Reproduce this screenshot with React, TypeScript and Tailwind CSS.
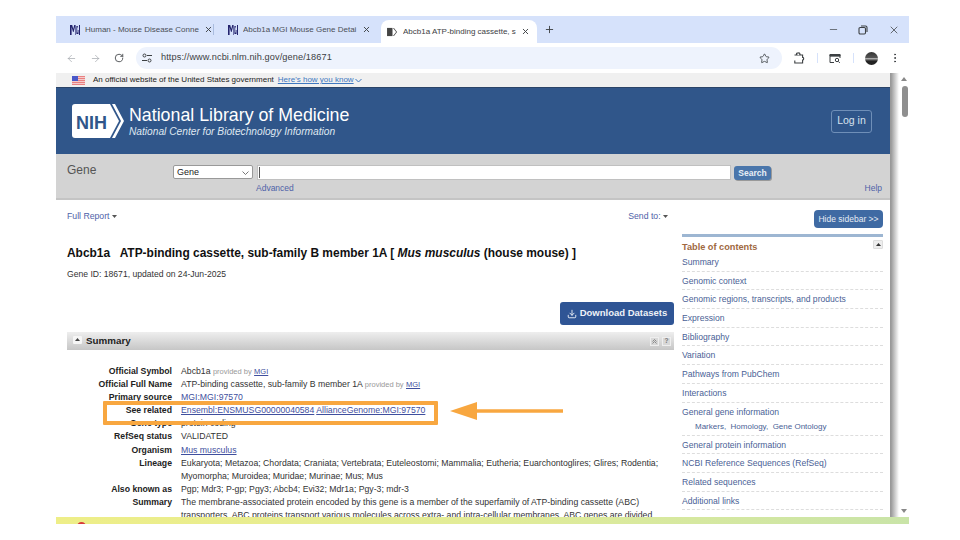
import React from 'react';
import { ArrowLeft, ArrowRight, Download, EllipsisVertical, Minus, Plus, RotateCw, Star, X } from 'lucide-react';

const toc = [
  'Summary',
  'Genomic context',
  'Genomic regions, transcripts, and products',
  'Expression',
  'Bibliography',
  'Variation',
  'Pathways from PubChem',
  'Interactions',
];
const toc2 = ['General protein information', 'NCBI Reference Sequences (RefSeq)', 'Related sequences', 'Additional links'];

function MgiIcon() {
  // favicon, three tall squeezed letters
  return (
    <svg width="10" height="10" viewBox="0 0 10 10" className="shrink-0">
      <path d="M0 0v10h1.6V2L3 7h.6L5 2v8h.6V0H4.2L3.3 4 2.2 0z" fill="#23236e" />
      <path d="M6.4 1h1.4v1.4H7.2v5.2h.6V5h.7v4H6.4z" fill="#23236e" />
      <path d="M9 0h1v10H9z" fill="#23236e" />
    </svg>
  );
}

function Tab({ title, active }: { title: string; active?: boolean }) {
  if (active) {
    return (
      <div className="flex items-center w-[156px] h-[23px] bg-white rounded-t-[8px] pl-[6px] pr-[7px] ml-[9px] mt-[4px]">
        <svg width="11" height="10" viewBox="0 0 12 11" className="shrink-0 mr-[5px]">
          <path d="M0 1h6v9H0z" fill="#444" />
          <path d="M6.6 1h1L11 5.5 7.6 10h-1L10 5.5z" fill="#444" />
        </svg>
        <span className="text-[8px] text-[#3c4043] whitespace-nowrap overflow-hidden flex-1">Abcb1a ATP-binding cassette, s</span>
        <X size={9} strokeWidth={2.5} className="text-[#3c4043] shrink-0 ml-[4px]" />
      </div>
    );
  }
  return (
    <div className="flex items-center w-[158px] h-[27px] pl-[14px] pr-[1px]">
      <MgiIcon />
      <span className="text-[8px] text-[#4a4f57] whitespace-nowrap overflow-hidden flex-1 ml-[5px]">{title}</span>
      <X size={9} strokeWidth={2.5} className="text-[#3c4043] shrink-0 ml-[4px]" />
    </div>
  );
}

function Row({ label, children }: { label: string; children: React.ReactNode }) {
  return (
    <div className="flex h-[13.1px] leading-[13px]">
      <div className="w-[105px] shrink-0 text-right font-bold text-[#222] whitespace-nowrap">{label}</div>
      <div className="ml-[9px] w-[484px] text-[#333] whitespace-nowrap">{children}</div>
    </div>
  );
}

function Lnk({ children }: { children: React.ReactNode }) {
  return <span className="text-[#3f4f9e] underline">{children}</span>;
}

function Caret() {
  return (
    <svg width="5" height="3" viewBox="0 0 5 3" className="inline-block align-[1px]"><path d="M0 0h5L2.5 3z" fill="#555" /></svg>
  );
}

export default function App() {
  return (
    <div className="w-[960px] h-[540px] bg-white pt-[16px] pl-[56px] overflow-hidden font-['Liberation_Sans',Arial,sans-serif]">
      <div className="relative w-[853px] h-[508px] flex flex-col overflow-hidden">
        {/* tab strip */}
        <div className="h-[27px] shrink-0 bg-[#d6e2fb] flex items-start">
          <Tab title="Human - Mouse Disease Conne" />
          <div className="w-px h-[11px] bg-[#a9bcdf] mt-[8px] -ml-px" />
          <Tab title="Abcb1a MGI Mouse Gene Detai" />
          <Tab title="" active />
          <Plus size={11} strokeWidth={2} className="text-[#3c4043] ml-[7px] mt-[8px]" />
          <div className="flex-1" />
          <Minus size={11} strokeWidth={1.5} className="text-[#3c4043] mt-[8px] mr-[19px]" />
          <svg width="10" height="10" viewBox="0 0 10 10" className="mt-[9px] mr-[20px]" fill="none" stroke="#3c4043" strokeWidth="1.1">
            <rect x="1" y="2.5" width="6.5" height="6.5" rx="1.2" />
            <path d="M3 1h4.5A1.5 1.5 0 0 1 9 2.5V7" />
          </svg>
          <X size={12} strokeWidth={1.5} className="text-[#3c4043] mt-[8px] mr-[9px]" />
        </div>

        {/* toolbar */}
        <div className="h-[30px] shrink-0 bg-white flex items-center rounded-t-[6px]">
          <ArrowLeft size={11} strokeWidth={1.5} className="text-[#a0a4aa] ml-[10px]" />
          <ArrowRight size={11} strokeWidth={1.5} className="text-[#a0a4aa] ml-[13px]" />
          <RotateCw size={10} strokeWidth={2} className="text-[#3c4043] ml-[13px]" />
          <div className="ml-[12px] w-[646px] shrink-0 h-[22px] bg-[#eef3fd] rounded-full flex items-center pl-[6px] pr-[12px]">
            <svg width="10" height="10" viewBox="0 0 10 10" fill="none" stroke="#3c4043" strokeWidth="1" className="shrink-0">
              <circle cx="2.5" cy="2.5" r="1.5" />
              <path d="M5 2.5h5M0 7.5h5" />
              <circle cx="7.5" cy="7.5" r="1.5" />
            </svg>
            <span className="ml-[9px] text-[9.2px] tracking-[0.1px] text-[#3c4043] flex-1">https://www.ncbi.nlm.nih.gov/gene/18671</span>
            <Star size={11} strokeWidth={1.8} className="text-[#3c4043]" />
          </div>
          <svg width="12" height="12" viewBox="0 0 12 12" fill="none" stroke="#3c4043" strokeWidth="1.1" className="ml-[11px] shrink-0">
            <path d="M1.5 3H4a1 1 0 0 1 1-1.8A1 1 0 0 1 6.6 3h3v2.4a1 1 0 0 1 1 1.4 1 1 0 0 1-1 1.2V11H1.8V8.5" />
          </svg>
          <div className="w-px h-[10px] bg-[#d6e2fb] ml-[12px] shrink-0" />
          <svg width="12" height="11" viewBox="0 0 12 11" fill="none" stroke="#3c4043" strokeWidth="1" className="ml-[11px] shrink-0">
            <path d="M5 9.5H1V1.5h10V5" />
            <path d="M1 1.5h10v1.6H1z" fill="#3c4043" />
            <circle cx="8" cy="7" r="1.7" />
            <path d="M9.3 8.4l1.5 1.5" />
          </svg>
          <div className="w-px h-[10px] bg-[#d6e2fb] ml-[12px] shrink-0" />
          <div className="w-[13px] h-[13px] shrink-0 rounded-full ml-[11px] bg-[linear-gradient(#333_0%,#555_45%,#aaa_50%,#222_70%)]" />
          <EllipsisVertical size={12} strokeWidth={2} className="text-[#3c4043] ml-[11px] shrink-0" />
        </div>

        {/* page */}
        <div className="flex-1 min-h-0 flex">
          <div className="relative w-[835px] shrink-0 flex flex-col min-h-0 overflow-hidden">
            {/* gov banner */}
            <div className="h-[14px] shrink-0 bg-[#f0f0f0] flex items-center pl-[16px]">
              <svg width="13" height="9" viewBox="0 0 13 9" className="shrink-0">
                <rect width="13" height="9" fill="#e98080" />
                <path d="M0 1.5h13M0 3.5h13M0 5.5h13M0 7.5h13" stroke="#f6dede" strokeWidth="0.8" />
                <rect width="6" height="5" fill="#4a58c8" />
              </svg>
              <span className="ml-[8px] text-[8px] text-[#222]">An official website of the United States government</span>
              <span className="ml-[4px] text-[8px] text-[#3f78c0] underline">Here's how you know</span>
              <svg width="7" height="5" viewBox="0 0 7 5" fill="none" stroke="#3f78c0" strokeWidth="1" className="ml-[1px]"><path d="M.5 1l3 3 3-3" /></svg>
            </div>

            {/* NIH header */}
            <div className="h-[67px] shrink-0 bg-[#30568a] flex items-center pl-[16px] pr-[19px] border-t border-[#2a4468]">
              <svg width="52" height="34" viewBox="0 0 52 34" className="shrink-0">
                <path d="M3 0h35l9 17-9 17H3a3 3 0 0 1-3-3V3a3 3 0 0 1 3-3z" fill="#fff" />
                <path d="M40 0h3l9 17-9 17h-3l9-17z" fill="#fff" />
                <text x="4" y="25" fontSize="18.5" fontWeight="700" fontFamily="Liberation Sans" fill="#30568a" textLength="31" lengthAdjust="spacingAndGlyphs">NIH</text>
              </svg>
              <div className="ml-[5px] text-white mt-[1px]">
                <div className="text-[17.8px] leading-[19px] whitespace-nowrap">National Library of Medicine</div>
                <div className="text-[10.2px] leading-[12px] mt-[1px] italic text-[#dfe6f0] whitespace-nowrap">National Center for Biotechnology Information</div>
              </div>
              <div className="flex-1" />
              <div className="w-[41px] h-[23px] border border-[#6f8fb8] rounded-[3px] flex items-center justify-center text-[10.5px] text-[#d8e2ee]">Log in</div>
            </div>

            {/* search bar */}
            <div className="h-[46px] shrink-0 bg-[#d3d3d3] border-b-2 border-[#c4c4c4] flex pl-[11px] pr-[9px]">
              <div className="w-[106px] shrink-0 text-[12px] text-[#555] pt-[7px]">Gene</div>
              <div className="mt-[11px] w-[80px] h-[14px] shrink-0 bg-white border border-[#999] rounded-[2px] flex items-center justify-between pl-[3px] pr-[3px] pt-px text-[9px] text-[#222]">
                Gene
                <svg width="7" height="4" viewBox="0 0 7 4" fill="none" stroke="#555" strokeWidth="0.8"><path d="M.5.5l3 3 3-3" /></svg>
              </div>
              <div className="ml-[4px] flex flex-col w-[474px] shrink-0">
                <div className="mt-[11px] h-[15px] bg-white border border-[#c0c0c0] flex items-center pl-[1px]">
                  <div className="w-px h-[11px] bg-[#555]" />
                </div>
                <div className="text-[8.5px] leading-[10px] text-[#4f62a8] mt-[3px] -ml-px">Advanced</div>
              </div>
              <div className="ml-[3px] mt-[12px] w-[37px] h-[14px] bg-[#4a76ab] rounded-[3px] shadow-[1px_1px_0_#999] flex items-center justify-center text-[8.5px] font-bold text-[#e8eef5]">Search</div>
              <div className="flex-1 text-right text-[8.5px] leading-[10px] text-[#4f62a8] mt-[29px]">Help</div>
            </div>

            {/* content */}
            <div className="flex-1 min-h-0 bg-white flex pl-[11px] pr-[8px] overflow-hidden">
              <div className="w-[607px] shrink-0">
                <div className="flex justify-between h-[10px] mt-[11px] text-[8.7px] leading-[10px] text-[#4f62a8] pr-[6px]">
                  <span>Full Report <Caret /></span>
                  <span>Send to: <Caret /></span>
                </div>
                <h1 className="mt-[25px] h-[14px] text-[11.95px] leading-[14px] font-bold text-[#111] whitespace-pre">Abcb1a   ATP-binding cassette, sub-family B member 1A [ <i>Mus musculus</i> (house mouse) ]</h1>
                <div className="mt-[9px] h-[10px] text-[8.6px] leading-[10px] text-[#333]">Gene ID: 18671, updated on 24-Jun-2025</div>
                <div className="flex justify-end mt-[23px]">
                  <div className="w-[114px] h-[23px] bg-[#2f5595] rounded-[3px] flex items-center justify-center text-[9.5px] font-bold text-[#eef2f8]">
                    <Download size={10} strokeWidth={2.2} className="mr-[3px]" />
                    Download Datasets
                  </div>
                </div>
                <div className="mt-[7px] h-[18px] bg-[linear-gradient(#eeeeee,#c6c6c6)] flex items-center pl-[6px] pr-[3px]">
                  <div className="w-[9px] h-[8px] bg-[#f6f6f6] rounded-[1px] flex items-center justify-center mb-[3px]">
                    <svg width="5" height="3" viewBox="0 0 5 3"><path d="M0 3l2.5-3L5 3z" fill="#444" /></svg>
                  </div>
                  <span className="ml-[4px] text-[9.8px] font-bold text-[#222]">Summary</span>
                  <div className="flex-1" />
                  <div className="w-[9px] h-[9px] bg-[#d8d8d8] border border-[#eee] flex items-center justify-center">
                    <svg width="5" height="5" viewBox="0 0 5 5" fill="none" stroke="#777" strokeWidth="0.8"><path d="M.5 2.5l2-2 2 2M.5 4.5l2-2 2 2" /></svg>
                  </div>
                  <div className="w-[9px] h-[9px] ml-[3px] bg-[#d8d8d8] border border-[#eee] flex items-center justify-center text-[6.5px] leading-none font-bold text-[#777]">?</div>
                </div>
                <div className="mt-[15px] text-[8.7px]">
                  <Row label="Official Symbol">Abcb1a <span className="text-[7.5px] text-[#999]">provided by</span> <span className="text-[7.5px]"><Lnk>MGI</Lnk></span></Row>
                  <Row label="Official Full Name">ATP-binding cassette, sub-family B member 1A <span className="text-[7.5px] text-[#999]">provided by</span> <span className="text-[7.5px]"><Lnk>MGI</Lnk></span></Row>
                  <Row label="Primary source"><Lnk>MGI:MGI:97570</Lnk></Row>
                  <Row label="See related"><Lnk>Ensembl:ENSMUSG00000040584</Lnk> <Lnk>AllianceGenome:MGI:97570</Lnk></Row>
                  <Row label="Gene type">protein coding</Row>
                  <Row label="RefSeq status">VALIDATED</Row>
                  <Row label="Organism"><Lnk>Mus musculus</Lnk></Row>
                  <Row label="Lineage">Eukaryota; Metazoa; Chordata; Craniata; Vertebrata; Euteleostomi; Mammalia; Eutheria; Euarchontoglires; Glires; Rodentia;</Row>
                  <Row label="">Myomorpha; Muroidea; Muridae; Murinae; Mus; Mus</Row>
                  <Row label="Also known as">Pgp; Mdr3; P-gp; Pgy3; Abcb4; Evi32; Mdr1a; Pgy-3; mdr-3</Row>
                  <Row label="Summary">The membrane-associated protein encoded by this gene is a member of the superfamily of ATP-binding cassette (ABC)</Row>
                  <Row label="">transporters. ABC proteins transport various molecules across extra- and intra-cellular membranes. ABC genes are divided</Row>
                </div>
              </div>

              <div className="w-[201px] shrink-0 ml-[8px]">
                <div className="flex justify-end mt-[10px]">
                  <div className="w-[69px] h-[18px] bg-[#3f6aa3] rounded-[4px] flex items-center justify-center text-[8.5px] text-[#e6ecf4]">Hide sidebar &gt;&gt;</div>
                </div>
                <div className="mt-[6px] h-[3px] bg-[#9db6d2]" />
                <div className="relative mt-[5px] h-[10px] text-[9.2px] leading-[10px] font-bold text-[#a0683f]">
                  Table of contents
                  <div className="absolute right-0 -top-[2px] w-[10px] h-[9px] bg-[#eeeeee] border border-[#ddd] rounded-[1px] flex items-center justify-center">
                    <svg width="5" height="3" viewBox="0 0 5 3"><path d="M0 3l2.5-3L5 3z" fill="#333" /></svg>
                  </div>
                </div>
                <div className="mt-[1px] text-[8.6px] text-[#4a5f96]">
                  {toc.map(t => (
                    <div key={t} className="h-[18.7px] leading-[18px] border-b border-dashed border-[#ddd] whitespace-nowrap">{t}</div>
                  ))}
                  <div className="h-[33px] border-b border-dashed border-[#ddd] pt-[4px]">
                    <div className="leading-[11px]">General gene information</div>
                    <div className="text-[8px] leading-[10px] pl-[13px] mt-[4px] whitespace-pre">Markers,  Homology,  Gene Ontology</div>
                  </div>
                  {toc2.map(t => (
                    <div key={t} className="h-[18.7px] leading-[18px] border-b border-dashed border-[#ddd] whitespace-nowrap">{t}</div>
                  ))}
                </div>
              </div>
            </div>

            {/* highlight box drawn over the text */}
            <div className="absolute left-[47px] top-[328px] w-[335px] h-[24px] border-[4px] border-[#f8a740] rounded-[1px]" />
            <svg width="113" height="20" viewBox="0 0 113 20" className="absolute left-[394px] top-[328px]">
              <path d="M113 10H24" stroke="#f8a740" strokeWidth="3.5" />
              <path d="M0 10L27 1v18z" fill="#f8a740" />
            </svg>
            <div className="absolute right-0 top-0 bottom-0 w-px bg-[#999]" />
          </div>

          {/* window edge + scrollbar */}
          <div className="w-[8px] shrink-0 bg-[linear-gradient(to_right,#999,#fff)]" />
          <div className="w-[10px] shrink-0 bg-white flex flex-col items-center justify-between relative">
            <svg width="6" height="4" viewBox="0 0 6 4" className="mt-[4px]"><path d="M0 4l3-4 3 4z" fill="#888" /></svg>
            <div className="absolute top-[13px] left-[3px] w-[6px] h-[31px] bg-[#8f8f8f] rounded-[3px]" />
            <svg width="6" height="4" viewBox="0 0 6 4" className="mb-[11px]"><path d="M0 0l3 4 3-4z" fill="#888" /></svg>
          </div>
        </div>

        {/* download bar, mostly cut off */}
        <div className="absolute left-0 bottom-0 w-full h-[7px] overflow-hidden bg-[linear-gradient(to_right,#eeee88,#e2ec98_50%,#c9e4a8)]">
          <div className="absolute left-[21px] top-[5px] w-[9px] h-[9px] rounded-full bg-[#d83a3a]" />
        </div>
      </div>
    </div>
  );
}
